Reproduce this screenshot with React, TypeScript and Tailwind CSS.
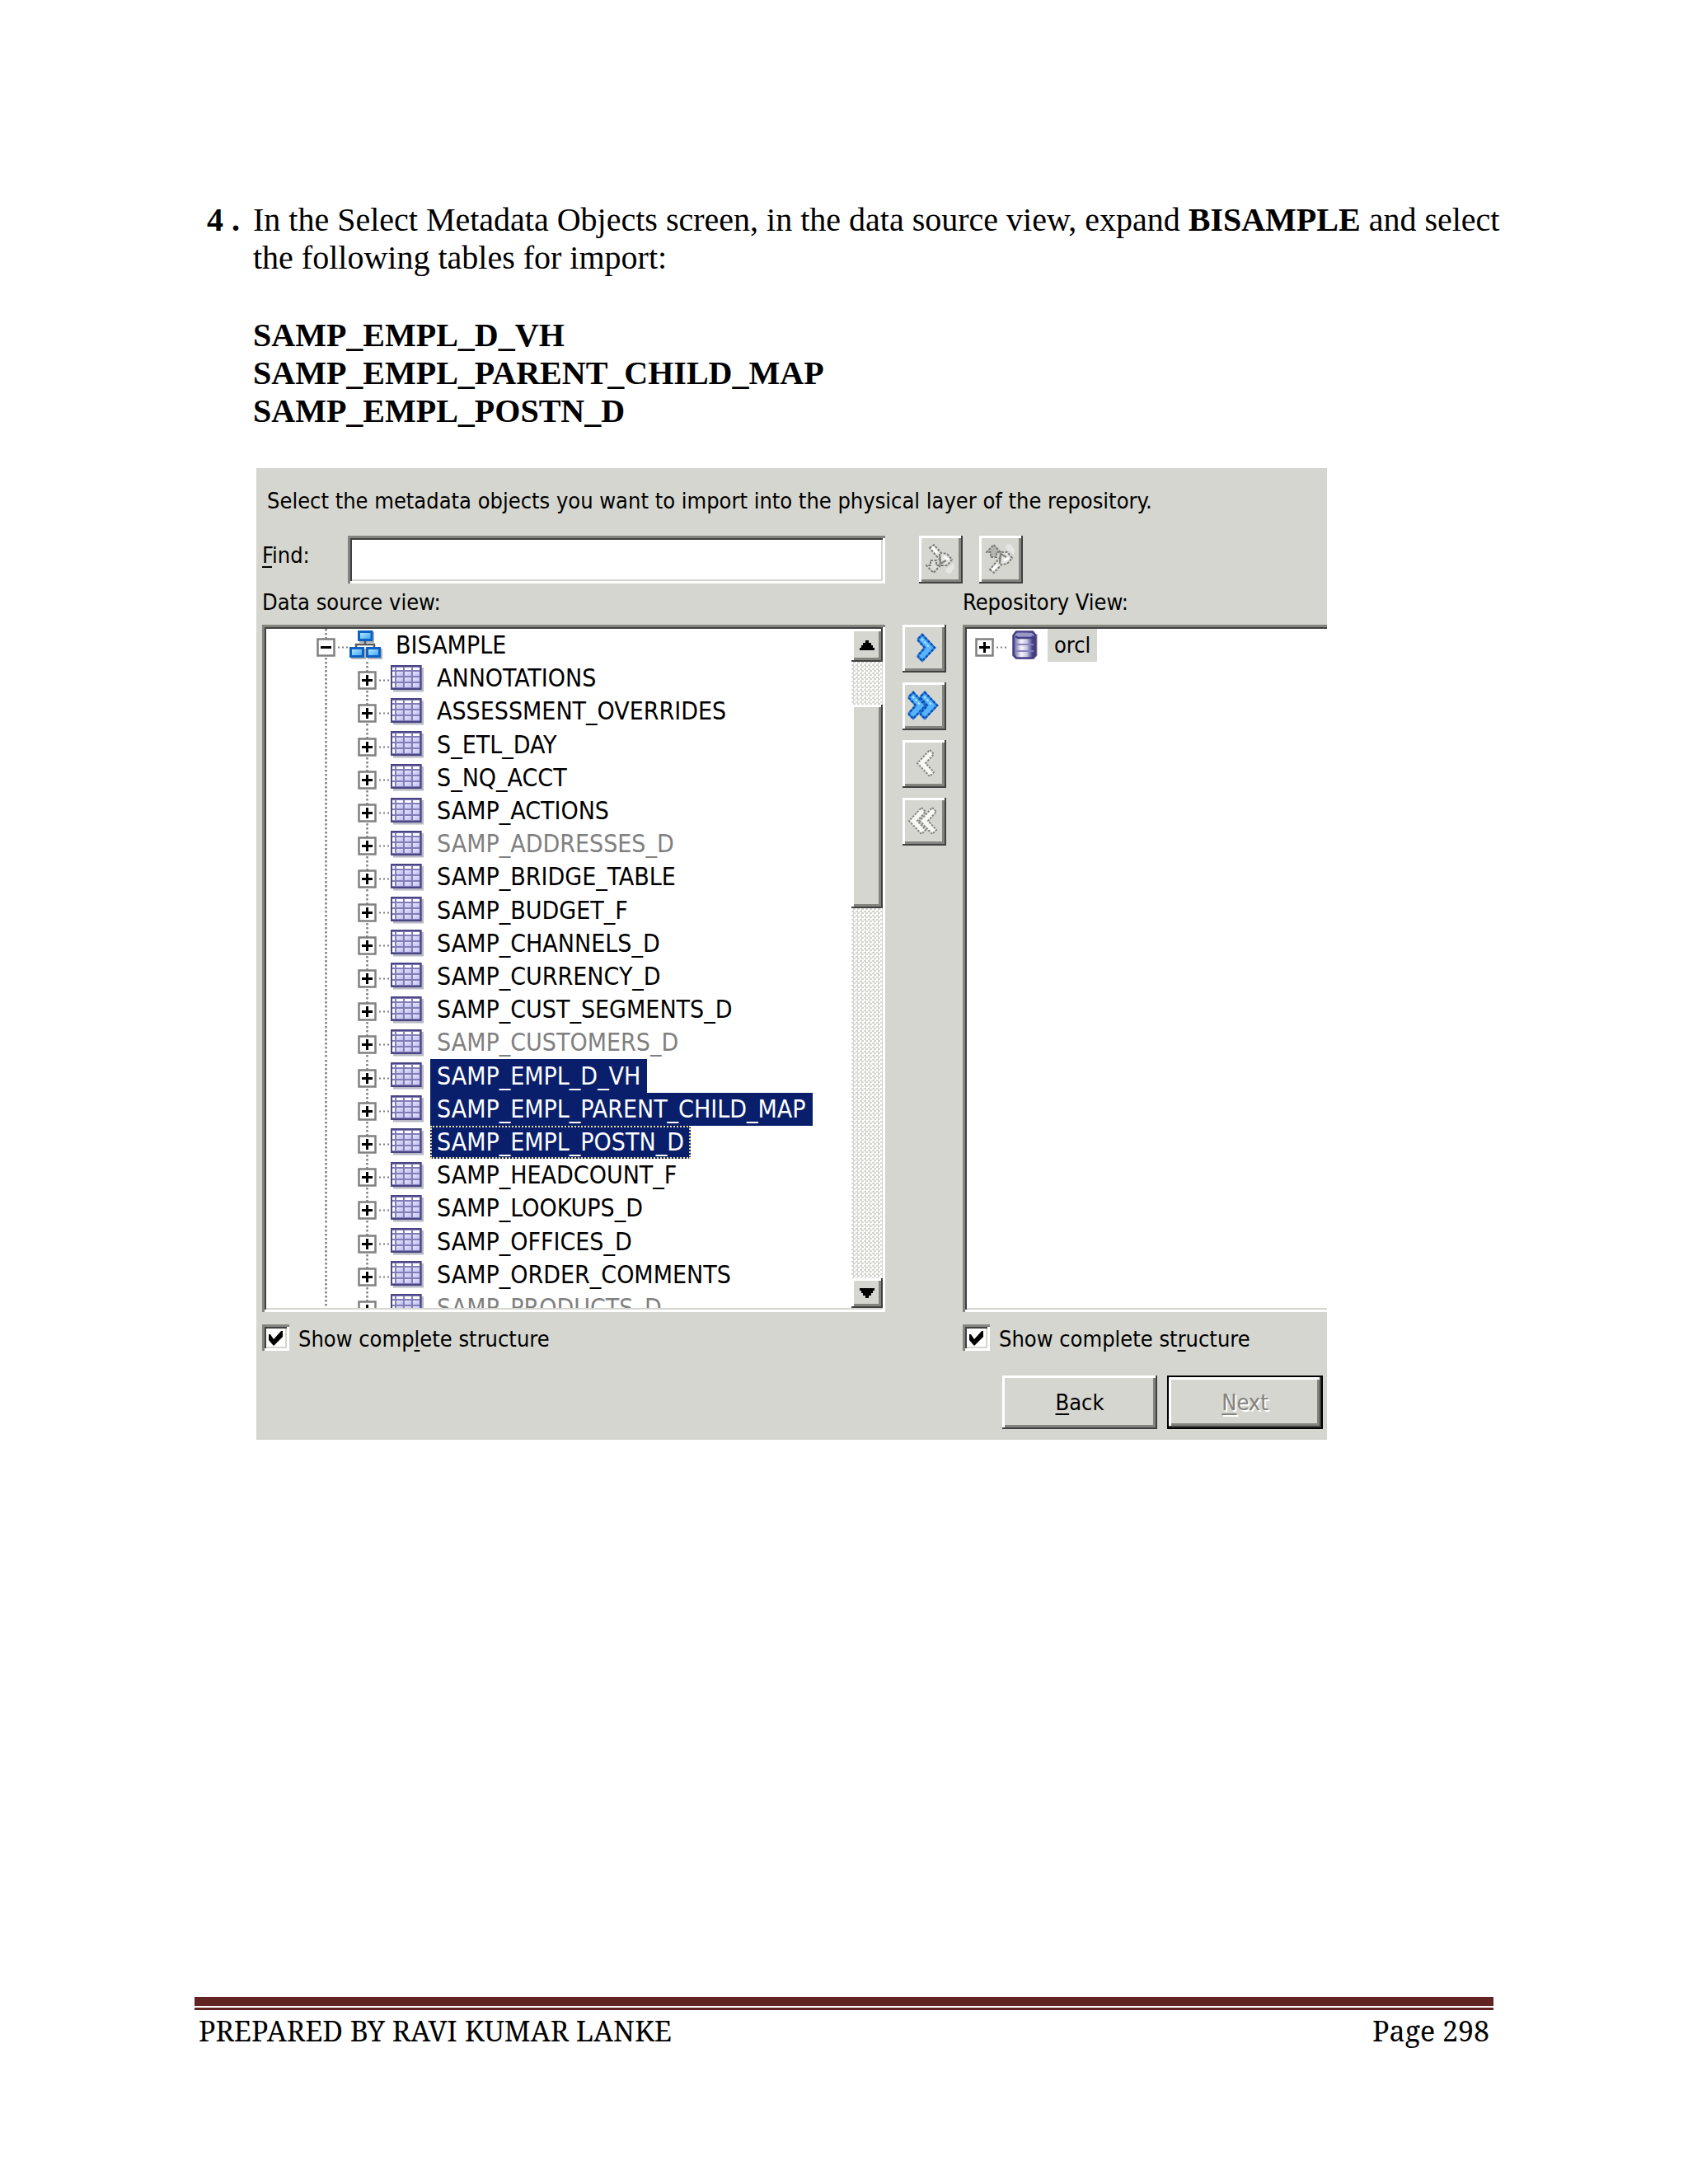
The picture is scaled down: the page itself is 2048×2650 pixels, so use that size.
import React from "react";

type TreeNode = { name: string; state?: "dimmed" | "selected" | "focused" };

const tables: TreeNode[] = [
  { name: "ANNOTATIONS" },
  { name: "ASSESSMENT_OVERRIDES" },
  { name: "S_ETL_DAY" },
  { name: "S_NQ_ACCT" },
  { name: "SAMP_ACTIONS" },
  { name: "SAMP_ADDRESSES_D", state: "dimmed" },
  { name: "SAMP_BRIDGE_TABLE" },
  { name: "SAMP_BUDGET_F" },
  { name: "SAMP_CHANNELS_D" },
  { name: "SAMP_CURRENCY_D" },
  { name: "SAMP_CUST_SEGMENTS_D" },
  { name: "SAMP_CUSTOMERS_D", state: "dimmed" },
  { name: "SAMP_EMPL_D_VH", state: "selected" },
  { name: "SAMP_EMPL_PARENT_CHILD_MAP", state: "selected" },
  { name: "SAMP_EMPL_POSTN_D", state: "focused" },
  { name: "SAMP_HEADCOUNT_F" },
  { name: "SAMP_LOOKUPS_D" },
  { name: "SAMP_OFFICES_D" },
  { name: "SAMP_ORDER_COMMENTS" },
  { name: "SAMP_PRODUCTS_D", state: "dimmed" },
];

const sunken =
  "shadow-[inset_3px_3px_0_#84847f,inset_-3px_-3px_0_#ffffff,inset_5px_5px_0_#404040,inset_-5px_-5px_0_#d5d6cf]";
const raised =
  "bg-[#d5d6cf] shadow-[inset_-2px_-2px_0_#404040,inset_3px_3px_0_#ffffff,inset_-5px_-5px_0_#84847f]";

const labelStyles = {
  plain: "text-black",
  dimmed: "text-[#808080]",
  selected: "bg-[#0a1f6b] text-white",
  focused:
    "bg-[#0a1f6b] text-white outline-2 -outline-offset-2 outline-dotted outline-[#e8dca0]",
};

function Toggle({ x, open = false }: { x: number; open?: boolean }) {
  return (
    <g>
      <rect x={x + 1.5} y="12.5" width="20" height="20" fill="#fff" stroke="#808080" strokeWidth="2.5" />
      <path d={`M${x + 5} 22.5h13`} stroke="#000" strokeWidth="3" />
      {!open && <path d={`M${x + 11.5} 16v13`} stroke="#000" strokeWidth="3" />}
      <path d={`M${x + 26} 22.5h13`} stroke="#808080" strokeWidth="2" strokeDasharray="2 3" />
    </g>
  );
}

function Guide({ d }: { d: string }) {
  return <path d={d} stroke="#808080" strokeWidth="2.5" strokeDasharray="2.5 2.5" />;
}

function TableIcon() {
  const cols = [
    [2, 3],
    [7, 8],
    [17, 8],
    [27, 8],
  ];
  const rows = [
    [3, 3],
    [8, 5],
    [15, 5],
    [22, 5],
  ];
  return (
    <svg width="40" height="33" viewBox="0 0 40 33" className="shrink-0" aria-hidden="true">
      <defs>
        <linearGradient id="cell" x1="0" y1="0" x2="1" y2="1">
          <stop offset="0" stopColor="#e6e5fc" />
          <stop offset="1" stopColor="#bfbdf0" />
        </linearGradient>
      </defs>
      <rect x="3" y="3" width="37" height="29.5" fill="#b9b9c6" />
      <rect x="0" y="0" width="37.5" height="30" fill="#827db6" />
      <rect x="1" y="1" width="35.5" height="28" fill="none" stroke="#4a4584" strokeWidth="2" />
      {rows.map(([y, h], r) =>
        cols.map(([x, w], c) => (
          <rect
            key={`${r}-${c}`}
            x={x}
            y={y}
            width={w}
            height={h}
            fill={r === 0 || c === 0 ? "#ffffff" : "url(#cell)"}
          />
        )),
      )}
    </svg>
  );
}

function SchemaIcon() {
  return (
    <svg width="40" height="36" viewBox="0 0 40 36" className="shrink-0" aria-hidden="true">
      <defs>
        <linearGradient id="node" x1="0" y1="0" x2="1" y2="1">
          <stop offset="0" stopColor="#c8f1ff" />
          <stop offset="1" stopColor="#2f9df5" />
        </linearGradient>
      </defs>
      <g fill="#b4b4b4">
        <rect x="12" y="2" width="18" height="13" />
        <rect x="2" y="22" width="18" height="13" />
        <rect x="22" y="22" width="18" height="13" />
      </g>
      <path d="M19 13v5M8 21v-4h22v4" fill="none" stroke="#5c5c5c" strokeWidth="2.5" />
      <g fill="url(#node)" stroke="#0b62c4" strokeWidth="3">
        <rect x="11.5" y="1.5" width="15.500" height="10" />
        <rect x="1.5" y="21.5" width="15" height="10" />
        <rect x="21.5" y="21.5" width="15" height="10" />
      </g>
    </svg>
  );
}

function DatabaseIcon() {
  return (
    <svg width="32" height="36" viewBox="0 0 32 36" className="shrink-0" aria-hidden="true">
      <defs>
        <linearGradient id="drum" x1="0" y1="0" x2="1" y2="0">
          <stop offset="0" stopColor="#5a5499" />
          <stop offset="0.35" stopColor="#f5f5ff" />
          <stop offset="0.6" stopColor="#c9c8e4" />
          <stop offset="0.85" stopColor="#4a4589" />
          <stop offset="1" stopColor="#3f3a7c" />
        </linearGradient>
      </defs>
      <path d="M5 4h26v26l-4 5H7z" fill="#c4c4cc" />
      <path
        d="M1.5 6L5 1.5h20L28.500 6v24L25 33.500H5L1.500 30z"
        fill="url(#drum)"
        stroke="#443f82"
        strokeWidth="2.5"
        strokeLinejoin="round"
      />
      <path d="M3 6L6 3h18l3 3l-3 3H6z" fill="#9a96c8" />
      <path d="M4 7l3 2h16l3-2" fill="none" stroke="#443f82" strokeWidth="2.500" />
      <path d="M4 17h22M4 25h22" fill="none" stroke="#8682ba" strokeWidth="2" />
    </svg>
  );
}

function ChevronIcon({ kind }: { kind: "add" | "addAll" | "remove" | "removeAll" }) {
  const right = kind === "add" || kind === "addAll";
  const double = kind === "addAll" || kind === "removeAll";
  const d = right
    ? "M7 2L22 18L7 34L2 29L2 27L10 18L2 9L2 7Z"
    : "M17 2L22 7L12 18L22 29L17 34L2 18Z";
  const offsets = double ? (right ? [0, 14] : [13, 0]) : [right ? 11 : 10];
  return (
    <svg width="38" height="36" viewBox="0 0 38 36" aria-hidden="true">
      {offsets.map((x) => (
        <g key={x} transform={`translate(${x} 0)`} strokeWidth="2.5">
          {right ? (
            <>
              <path d={d} fill="#55b4fb" stroke="#2a78d8" />
              <path d={d} fill="none" stroke="#0b4fb4" strokeDasharray="2.5 2.5" />
              <path d="M6 7L16 18" stroke="#b5e4ff" strokeWidth="2" strokeDasharray="3 2" />
            </>
          ) : (
            <path d={d} fill="#f7f7f4" stroke="#85857f" strokeWidth="2" strokeDasharray="2.5 1.500" />
          )}
        </g>
      ))}
    </svg>
  );
}

function SearchIcon({ up = false }: { up?: boolean }) {
  return (
    <svg width="36" height="38" viewBox="0 0 36 38" aria-hidden="true">
      <g transform={up ? "translate(0 38) scale(1 -1)" : undefined}>
        <path d="M24 32L34 24L35 30L30 37L25 36Z" fill="#e6e6e2" />
        <path
          d="M5 6L10 2L19 12L26 13L32 20L26 27L19 27L17 20Z"
          fill="#e4e4e0"
          stroke="#7c7c77"
          strokeWidth="2"
          strokeDasharray="3 1.500"
        />
        <path d="M17 13L18 25L25 21" fill="none" stroke="#85857f" strokeWidth="2.500" />
        <path d="M8 5L14 12M22 17L28 20" stroke="#fff" strokeWidth="3" />
        <path
          d="M6 21h7v6h5l-8.500 9L1 27h5z"
          fill={up ? "#b4b4b0" : "#dededa"}
          stroke="#7c7c77"
          strokeWidth="2"
          strokeDasharray="3 1.500"
        />
      </g>
    </svg>
  );
}

function IconButton({ label, children, disabled }: { label: string; children: React.ReactNode; disabled?: boolean }) {
  return (
    <button
      type="button"
      aria-label={label}
      disabled={disabled}
      className={`flex h-[58px] w-[53px] shrink-0 items-center justify-center pr-[2px] pb-[2px] ${raised}`}
    >
      {children}
    </button>
  );
}

function TreeLabel({ name, state }: TreeNode) {
  return (
    <span className={`ml-2 flex h-full items-center px-2 text-[30px] ${labelStyles[state ?? "plain"]}`}>{name}</span>
  );
}

function StructureCheck({ id, children }: { id: string; children: React.ReactNode }) {
  return (
    <div className="flex h-8 items-center">
      <span className="relative flex h-8 w-[33px]">
        <input id={id} type="checkbox" defaultChecked className={`peer size-full appearance-none bg-white ${sunken}`} />
        <svg
          viewBox="0 0 33 32"
          className="pointer-events-none absolute inset-0 hidden size-full peer-checked:block"
          aria-hidden="true"
        >
          <path d="M8 12v7l6 7L25 15V8h-2l-9 10l-4-6z" fill="#000" />
        </svg>
      </span>
      <label htmlFor={id} className="mt-1 ml-[11px]">
        {children}
      </label>
    </div>
  );
}

function ScrollBar() {
  const track = "bg-[repeating-conic-gradient(#d5d6cf_0_25%,#ffffff_0_50%)] bg-[length:5px_5px]";
  return (
    <div className="-mr-[2px] flex h-full w-[38px] shrink-0 flex-col">
      <button type="button" aria-label="Scroll up" className={`flex h-10 items-center justify-center ${raised}`}>
        <svg width="20" height="12" viewBox="0 0 20 12" aria-hidden="true">
          <path d="M8 0h4v3h3v3h2v3h2v3H1V9h2V6h2V3h3z" />
        </svg>
      </button>
      <div className={`h-[52px] ${track}`} />
      <div className={`h-[247px] ${raised}`} />
      <div className={`flex-1 ${track}`} />
      <button type="button" aria-label="Scroll down" className={`flex h-9 items-center justify-center ${raised}`}>
        <svg width="20" height="12" viewBox="0 0 20 12" aria-hidden="true">
          <path d="M8 12h4V9h3V6h2V3h2V0H1v3h2v3h2v3h3z" />
        </svg>
      </button>
    </div>
  );
}

const columns = "grid grid-cols-[756fr_94px_442fr]";
const mnemonic = "underline decoration-2 underline-offset-4";

function ImportPanel() {
  return (
    <section className="mr-[438px] ml-[311px] bg-[#d5d6cf] pt-6 pb-[13px] pl-[7px] font-['DejaVu_Sans_Condensed','DejaVu_Sans',sans-serif] text-[27px] leading-8 whitespace-nowrap text-black">
      <p className="pl-[6px]">Select the metadata objects you want to import into the physical layer of the repository.</p>

      <div className={`mt-[26px] ${columns}`}>
        <div className="flex h-[58px]">
          <label htmlFor="find" className="mt-2 w-[104px] shrink-0 self-start">
            <span className={mnemonic}>F</span>ind:
          </label>
          <input id="find" type="text" className={`h-full min-w-0 flex-1 bg-white px-3 outline-none ${sunken}`} />
        </div>
        <div className="col-span-2 flex gap-5 pl-[41px]">
          <IconButton label="Find next" disabled>
            <SearchIcon />
          </IconButton>
          <IconButton label="Find previous" disabled>
            <SearchIcon up />
          </IconButton>
        </div>
      </div>

      <div className={`mt-[7px] ${columns}`}>
        <h2>Data source view:</h2>
        <h2 className="col-start-3">Repository View:</h2>
      </div>

      <div className={`mt-[11px] h-[834px] ${columns}`}>
        <div className={`flex h-[834px] min-w-0 items-start overflow-hidden bg-white p-[5px] ${sunken}`}>
          <div className="flex h-full min-w-0 flex-1 flex-col overflow-hidden">
            <ul className="grid h-[844px] shrink-0 auto-rows-fr">
              <li className="flex items-center">
                <svg width="101" height="40" viewBox="0 0 101 40" className="shrink-0" aria-hidden="true">
                  <Guide d="M72.500 0v41" />
                  <Toggle x={61} open />
                </svg>
                <SchemaIcon />
                <TreeLabel name="BISAMPLE" />
              </li>
              {tables.map((node) => (
                <li key={node.name} className="flex items-center">
                  <svg width="151" height="40" viewBox="0 0 151 40" className="shrink-0" aria-hidden="true">
                    <Guide d="M72.500 0v41M122.500 0v41" />
                    <Toggle x={111} />
                  </svg>
                  <TableIcon />
                  <TreeLabel {...node} />
                </li>
              ))}
            </ul>
          </div>
          <ScrollBar />
        </div>

        <div className="flex flex-col items-center gap-3">
          <IconButton label="Import selected">
            <ChevronIcon kind="add" />
          </IconButton>
          <IconButton label="Import all">
            <ChevronIcon kind="addAll" />
          </IconButton>
          <IconButton label="Remove selected" disabled>
            <ChevronIcon kind="remove" />
          </IconButton>
          <IconButton label="Remove all" disabled>
            <ChevronIcon kind="removeAll" />
          </IconButton>
        </div>

        <div className="bg-white pt-[5px] pb-[5px] pl-[5px] shadow-[inset_3px_3px_0_#84847f,inset_0_-3px_0_#ffffff,inset_5px_5px_0_#404040,inset_0_-5px_0_#d5d6cf]">
          <ul>
            <li className="flex h-10 items-center">
              <svg width="55" height="40" viewBox="0 0 55 40" className="shrink-0" aria-hidden="true">
                <Toggle x={10} />
              </svg>
              <DatabaseIcon />
              <span className="ml-[11px] flex h-full items-center bg-[#d5d6cf] px-2">orcl</span>
            </li>
          </ul>
        </div>
      </div>

      <div className={`mt-[15px] ${columns}`}>
        <StructureCheck id="source-structure">
          Show comp<span className={mnemonic}>l</span>ete structure
        </StructureCheck>
        <div className="col-start-3">
          <StructureCheck id="repository-structure">
            Show complete st<span className={mnemonic}>r</span>ucture
          </StructureCheck>
        </div>
      </div>

      <div className="mt-[30px] flex justify-end gap-3 pr-[5px]">
        <button type="button" className={`h-[65px] w-[188px] ${raised}`}>
          <span className={mnemonic}>B</span>ack
        </button>
        <button type="button" disabled className="h-[65px] w-[189px] bg-black p-[2px]">
          <span
            className={`flex size-full items-center justify-center text-[#84847f] [text-shadow:2px_2px_0_#ffffff] ${raised}`}
          >
            <span className={mnemonic}>N</span>ext
          </span>
        </button>
      </div>
    </section>
  );
}

export default function App() {
  return (
    <div className="flex min-h-screen flex-col bg-white text-black">
      <main>
        <div className="flex pt-[244px] pr-[200px] pl-[251px] font-['Liberation_Serif','Times_New_Roman',serif] text-[40px] leading-[46px]">
          <p className="w-14 shrink-0 font-bold">4 .</p>
          <div>
            <p>
              In the Select Metadata Objects screen, in the data source view, expand <b>BISAMPLE</b> and select the
              following tables for import:
            </p>
            <ul className="mt-12 font-bold">
              <li>SAMP_EMPL_D_VH</li>
              <li>SAMP_EMPL_PARENT_CHILD_MAP</li>
              <li>SAMP_EMPL_POSTN_D</li>
            </ul>
          </div>
        </div>
        <div className="mt-[46px]">
          <ImportPanel />
        </div>
      </main>

      <footer className="mx-[236px] mt-auto pb-[166px] font-['Noto_Serif',serif] text-[34px] leading-10">
        <div className="h-[11px] bg-[#622423]" />
        <div className="mt-[2px] h-[3px] bg-[#622423]" />
        <div className="mt-[5px] flex justify-between px-[5px]">
          <p>PREPARED BY RAVI KUMAR LANKE</p>
          <p>Page 298</p>
        </div>
      </footer>
    </div>
  );
}
